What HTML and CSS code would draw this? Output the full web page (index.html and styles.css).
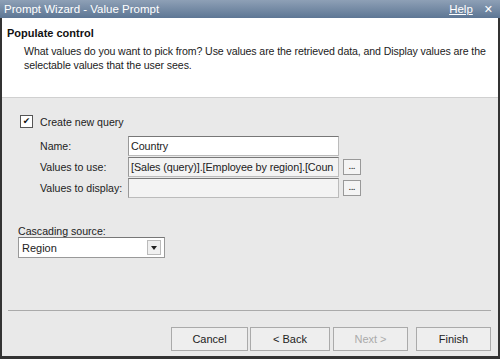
FILE: index.html
```html
<!DOCTYPE html>
<html lang="en">
<head>
  <meta charset="UTF-8">
  <title>Prompt Wizard - Value Prompt</title>
  <link rel="stylesheet" href="styles.css">
</head>
<body>

  <div class="wizard">
    <!-- Title bar -->
    <div class="titlebar">
      <span class="title">Prompt Wizard - Value Prompt</span>
      <span class="title-tools">
        <a href="#" class="help">Help</a>
        <span class="close">&#x2715;</span>
      </span>
    </div>

    <!-- Header -->
    <div class="header">
      <h2>Populate control</h2>
      <p>What values do you want to pick from? Use values are the retrieved data, and Display values are the selectable values that the user sees.</p>
    </div>

    <!-- Body -->
    <div class="content">
      <label class="check-row">
        <span class="checkbox">&#x2714;</span>
        Create new query
      </label>

      <div class="fields">
        <span class="field-label">Name:</span>
        <div class="input">Country</div>
        <span></span>

        <span class="field-label">Values to use:</span>
        <div class="input grey">[Sales (query)].[Employee by region].[Coun</div>
        <button class="dots">...</button>

        <span class="field-label">Values to display:</span>
        <div class="input grey"></div>
        <button class="dots">...</button>
      </div>

      <div class="cascade">
        <div class="cascade-label">Cascading source:</div>
        <div class="select">
          <span>Region</span>
          <span class="arrow"></span>
        </div>
      </div>
    </div>

    <!-- Footer -->
    <div class="footer">
      <button class="btn cancel">Cancel</button>
      <button class="btn back">&lt; Back</button>
      <button class="btn disabled">Next &gt;</button>
      <button class="btn finish">Finish</button>
    </div>
  </div>

</body>
</html>
```
FILE: styles.css
```css
body {
  margin: 0;
  padding: 0;
  font-family: 'Liberation Sans', Arial, sans-serif;
  font-size: 10.6px;
  color: #222;
  background: #fff;
}

.wizard {
  width: 500px;
  height: 359px;
  box-sizing: border-box;
  border-left: 2px solid #333;
  border-right: 2px solid #333;
  border-bottom: 3px solid #333;
  background: #e9e9e9;
  display: flex;
  flex-direction: column;
}

/* Title bar */
.titlebar {
  height: 18px;
  display: flex;
  justify-content: space-between;
  align-items: center;
  background: linear-gradient(to bottom, #8ea0b6, #5d7694);
  color: #fff;
  padding: 0 7px 0 4px;
  margin: 0 -2px;
  font-size: 11.5px;
}

.title-tools {
  display: flex;
  align-items: center;
  gap: 11px;
}

.help {
  color: #fff;
  text-decoration: underline;
}

.close {
  font-family: 'DejaVu Sans', sans-serif;
  font-size: 11px;
  font-weight: bold;
}

/* Header */
.header {
  background: #fff;
  height: 70px;
  padding: 9px 5px 0 5px;
  border-bottom: 1px solid #d0d0d0;
}

.header h2 {
  margin: 0 0 5px 0;
  font-size: 11px;
  font-weight: bold;
  color: #111;
}

.header p {
  margin: 0 0 0 17px;
  line-height: 14px;
  letter-spacing: -0.1px;
  color: #222;
}

/* Content */
.content {
  flex: 1;
  padding: 17px 0 0 14px;
}

.check-row {
  display: flex;
  align-items: center;
  gap: 7px;
  margin-left: 4px;
}

.checkbox {
  width: 11px;
  height: 11px;
  border: 1px solid #555;
  background: #fff;
  font-family: 'DejaVu Sans', sans-serif;
  font-size: 9px;
  line-height: 11px;
  text-align: center;
  color: #111;
}

.fields {
  display: grid;
  grid-template-columns: 88px 211px 22px;
  row-gap: 1px;
  align-items: center;
  margin: 8px 0 0 24px;
}

.field-label {
  color: #222;
  white-space: nowrap;
}

.input {
  height: 20px;
  box-sizing: border-box;
  border: 1px solid #bbb;
  border-top-color: #777;
  border-left-color: #999;
  background: #fff;
  padding: 3px 2px;
  white-space: nowrap;
  overflow: hidden;
  font-size: 10.8px;
  letter-spacing: -0.1px;
}

.input.grey {
  background: #f3f3f3;
}

.dots {
  width: 18px;
  height: 16px;
  margin-left: 4px;
  padding: 0;
  border: 1px solid #999;
  background: #f4f4f4;
  font-family: inherit;
  font-size: 8px;
  font-weight: bold;
  line-height: 10px;
  color: #333;
}

.cascade {
  margin: 27px 0 0 2px;
}

.cascade-label {
  line-height: 12px;
  margin-bottom: 0;
}

.select {
  width: 147px;
  height: 21px;
  box-sizing: border-box;
  border: 1px solid #999;
  border-top-color: #777;
  background: #fff;
  display: flex;
  justify-content: space-between;
  align-items: center;
  padding: 0 3px 0 3px;
  font-size: 11px;
}

.arrow {
  width: 14px;
  height: 15px;
  box-sizing: border-box;
  border: 1px solid #bbb;
  background: #f0f0f0;
  position: relative;
}

.arrow::after {
  content: "";
  position: absolute;
  left: 3px;
  top: 5px;
  border-left: 3px solid transparent;
  border-right: 3px solid transparent;
  border-top: 4px solid #222;
}

/* Footer */
.footer {
  margin: 0 7px 0 6px;
  border-top: 1px solid #aaa;
  padding: 16px 0 5px 0;
  display: flex;
  justify-content: flex-end;
}

.btn {
  width: 75px;
  height: 24px;
  border: 1px solid #aaa;
  background: #eee;
  font-family: inherit;
  font-size: 11px;
  color: #222;
}

.btn.cancel {
  width: 77px;
  margin-right: 2px;
}

.btn.back {
  width: 80px;
  margin-right: 3px;
}

.btn.disabled {
  color: #aaa;
}

.btn.finish {
  margin-left: 8px;
}
```
